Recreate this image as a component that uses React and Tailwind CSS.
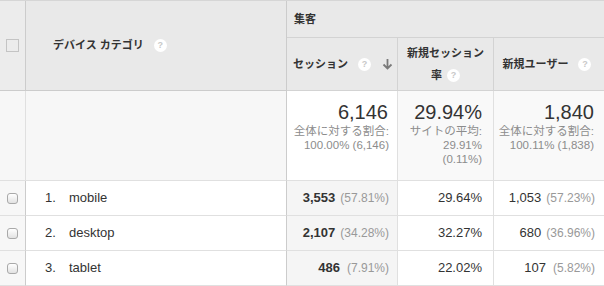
const ROWS = [
  { n: '1.', name: 'mobile', sessions: '3,553', sessPct: '(57.81%)', rate: '29.64%', users: '1,053', usersPct: '(57.23%)' },
  { n: '2.', name: 'desktop', sessions: '2,107', sessPct: '(34.28%)', rate: '32.27%', users: '680', usersPct: '(36.96%)' },
  { n: '3.', name: 'tablet', sessions: '486', sessPct: '(7.91%)', rate: '22.02%', users: '107', usersPct: '(5.82%)' },
]

function Help({ gap = 'ml-[10px]' }) {
  return (
    <span className={`${gap} inline-flex h-[13px] w-[13px] items-center justify-center rounded-full bg-white text-[9px] font-bold leading-none text-[#c8c8c8]`}>
      ?
    </span>
  )
}

function SortArrow() {
  return (
    <svg width="11" height="12" viewBox="0 0 11 12" className="ml-[11px]">
      <path d="M5.5 1v9M1.5 6.5l4 4 4-4" stroke="#7a7a7a" strokeWidth="1.8" fill="none" />
    </svg>
  )
}

function RowCheck() {
  return (
    <span className="block h-[11px] w-[11px] rounded-[3px] border border-[#a9a9a9] bg-gradient-to-b from-white to-[#e2e2e2]" />
  )
}

export default function App() {
  return (
    <div className="h-[286px] w-[604px] overflow-hidden bg-white font-['Liberation_Sans','Noto_Sans_CJK_JP',sans-serif] text-[#333]">
      <div className="grid grid-cols-[26px_261px_111px_96px_110px] border-t border-[#d6d6d6]">
        {/* HEADER */}
        <div className="row-span-2 flex h-[90px] items-center justify-center border-r border-b border-[#cccccc] bg-[#ececec]">
          <span className="block h-[13px] w-[13px] border border-[#c4c4c4] bg-[#ececec]" />
        </div>
        <div className="row-span-2 flex h-[90px] items-center border-r border-b border-[#cccccc] bg-[#e9e9e9] pl-[27px] text-[11px] font-bold">
          デバイス カテゴリ
          <Help />
        </div>
        <div className="col-span-3 flex h-[37px] items-center border-b border-[#d3d3d3] bg-[#e9e9e9] pl-[7px] text-[11px] font-bold">
          集客
        </div>
        <div className="flex h-[53px] items-center justify-center border-r border-b border-[#d3d3d3] bg-[#e9e9e9] pl-[2px] text-[11px] font-bold">
          セッション
          <Help />
          <SortArrow />
        </div>
        <div className="flex h-[53px] flex-col items-center justify-center border-r border-b border-[#d3d3d3] bg-[#e9e9e9] text-[11px] font-bold leading-[22px]">
          <span>新規セッション</span>
          <span className="flex items-center">
            率
            <Help gap="ml-[5px]" />
          </span>
        </div>
        <div className="flex h-[53px] items-center justify-center border-b border-[#d3d3d3] bg-[#e9e9e9] pr-[4px] text-[11px] font-bold">
          新規ユーザー
          <Help />
        </div>

        {/* SUMMARY */}
        <div className="h-[90px] border-r border-b border-[#e0e0e0] bg-[#f7f7f7]" />
        <div className="h-[90px] border-r border-b border-[#cccccc] border-b-[#e0e0e0] bg-[#f7f7f7]" />
        <div className="h-[90px] border-r border-b border-[#e0e0e0] bg-white pt-[9px] pr-[8px] text-right">
          <div className="pr-[1px] text-[20px] leading-[24px]">6,146</div>
          <div className="text-[11.5px] leading-[14px] text-[#8c8c8c]">全体に対する割合:</div>
          <div className="text-[11.5px] leading-[14px] text-[#8c8c8c]">100.00% (6,146)</div>
        </div>
        <div className="h-[90px] border-r border-b border-[#e0e0e0] bg-[#f9f9f9] pt-[9px] pr-[11px] text-right">
          <div className="text-[20px] leading-[24px]">29.94%</div>
          <div className="text-[11.5px] leading-[14px] text-[#8c8c8c]">サイトの平均:</div>
          <div className="text-[11.5px] leading-[14px] text-[#8c8c8c]">29.91%</div>
          <div className="text-[11.5px] leading-[14px] text-[#8c8c8c]">(0.11%)</div>
        </div>
        <div className="h-[90px] border-b border-[#e0e0e0] bg-[#f9f9f9] pt-[9px] pr-[10px] text-right">
          <div className="text-[20px] leading-[24px]">1,840</div>
          <div className="text-[11.5px] leading-[14px] text-[#8c8c8c]">全体に対する割合:</div>
          <div className="text-[11.5px] leading-[14px] text-[#8c8c8c]">100.11% (1,838)</div>
        </div>

        {/* ROWS */}
        {ROWS.map((r) => (
          <div key={r.n} className="contents">
            <div className="flex h-[35px] items-center justify-center border-r border-b border-[#e0e0e0] border-r-[#cccccc] bg-[#f7f7f7]">
              <RowCheck />
            </div>
            <div className="flex h-[35px] items-center border-r border-b border-[#e0e0e0] border-r-[#cccccc] bg-white pl-[18px] text-[13px]">
              <span className="w-[25px] pl-px">{r.n}</span>
              <span>{r.name}</span>
            </div>
            <div className="flex h-[35px] items-center justify-end border-r border-b border-[#e0e0e0] bg-[#f5f5f5] pr-[8px] text-[13px]">
              <span className="font-bold">{r.sessions}</span>
              <span className="ml-[5px] min-w-[44px] text-right text-[12px] text-[#999]">{r.sessPct}</span>
            </div>
            <div className="flex h-[35px] items-center justify-end border-r border-b border-[#e0e0e0] bg-white pr-[11px] text-[13px]">
              {r.rate}
            </div>
            <div className="flex h-[35px] items-center justify-end border-b border-[#e0e0e0] bg-white pr-[9px] text-[13px]">
              <span>{r.users}</span>
              <span className="ml-[5px] min-w-[44px] text-right text-[12px] text-[#999]">{r.usersPct}</span>
            </div>
          </div>
        ))}
      </div>
    </div>
  )
}
